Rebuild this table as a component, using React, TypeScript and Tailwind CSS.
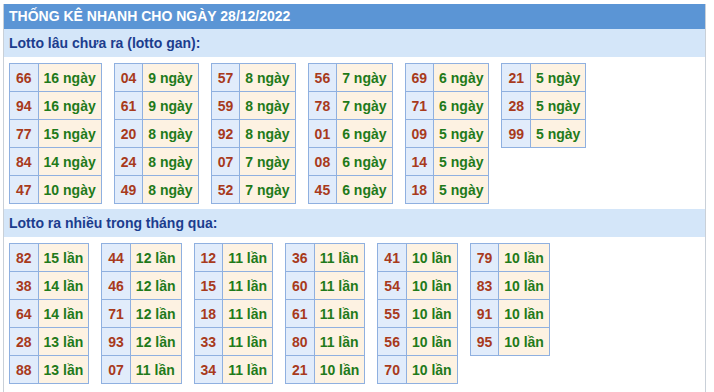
import React from "react";

const gan: [string, string][][] = [
  [["66", "16 ngày"], ["94", "16 ngày"], ["77", "15 ngày"], ["84", "14 ngày"], ["47", "10 ngày"]],
  [["04", "9 ngày"], ["61", "9 ngày"], ["20", "8 ngày"], ["24", "8 ngày"], ["49", "8 ngày"]],
  [["57", "8 ngày"], ["59", "8 ngày"], ["92", "8 ngày"], ["07", "7 ngày"], ["52", "7 ngày"]],
  [["56", "7 ngày"], ["78", "7 ngày"], ["01", "6 ngày"], ["08", "6 ngày"], ["45", "6 ngày"]],
  [["69", "6 ngày"], ["71", "6 ngày"], ["09", "5 ngày"], ["14", "5 ngày"], ["18", "5 ngày"]],
  [["21", "5 ngày"], ["28", "5 ngày"], ["99", "5 ngày"]],
];

const nhieu: [string, string][][] = [
  [["82", "15 lần"], ["38", "14 lần"], ["64", "14 lần"], ["28", "13 lần"], ["88", "13 lần"]],
  [["44", "12 lần"], ["46", "12 lần"], ["71", "12 lần"], ["93", "12 lần"], ["07", "11 lần"]],
  [["12", "11 lần"], ["15", "11 lần"], ["18", "11 lần"], ["33", "11 lần"], ["34", "11 lần"]],
  [["36", "11 lần"], ["60", "11 lần"], ["61", "11 lần"], ["80", "11 lần"], ["21", "10 lần"]],
  [["41", "10 lần"], ["54", "10 lần"], ["55", "10 lần"], ["56", "10 lần"], ["70", "10 lần"]],
  [["79", "10 lần"], ["83", "10 lần"], ["91", "10 lần"], ["95", "10 lần"]],
];

function T({ rows }: { rows: [string, string][] }) {
  return (
    <table className="border-collapse">
      <tbody>
        {rows.map(([n, v], i) => (
          <tr key={i} className="h-[28px]">
            <td className="border border-[#8fb0e0] bg-[#e1ecfb] px-[6px] text-[#a83a1c] leading-none">{n}</td>
            <td className="border border-[#8fb0e0] bg-[#fdf2e2] px-[5px] text-[#1f7a1a] leading-none">{v}</td>
          </tr>
        ))}
      </tbody>
    </table>
  );
}

function Section({ title, data }: { title: string; data: [string, string][][] }) {
  return (
    <>
      <div className="h-[28px] bg-[#d4e6f9] pl-[5px] flex items-center text-[14px] font-bold text-[#1c3d8e]">{title}</div>
      <div className="flex items-start gap-x-[12px] pl-[5px] pt-[6px] pb-[5px] text-[14px] font-bold">
        {data.map((d, i) => (
          <T key={i} rows={d} />
        ))}
      </div>
    </>
  );
}

export default function App() {
  return (
    <div className="w-[714px] h-[392px] bg-white overflow-hidden" style={{ fontFamily: '"Liberation Sans", Arial, sans-serif' }}>
      <div className="ml-[3px] mt-[4px] w-[703px] h-[388px] border-x border-[#c9d0d8]">
        <div className="h-[25px] bg-[#5b95d5] pl-[5px] flex items-center text-white font-bold text-[14px]">
          THỐNG KÊ NHANH CHO NGÀY 28/12/2022
        </div>
        <Section title="Lotto lâu chưa ra (lotto gan):" data={gan} />
        <Section title="Lotto ra nhiều trong tháng qua:" data={nhieu} />
      </div>
    </div>
  );
}
